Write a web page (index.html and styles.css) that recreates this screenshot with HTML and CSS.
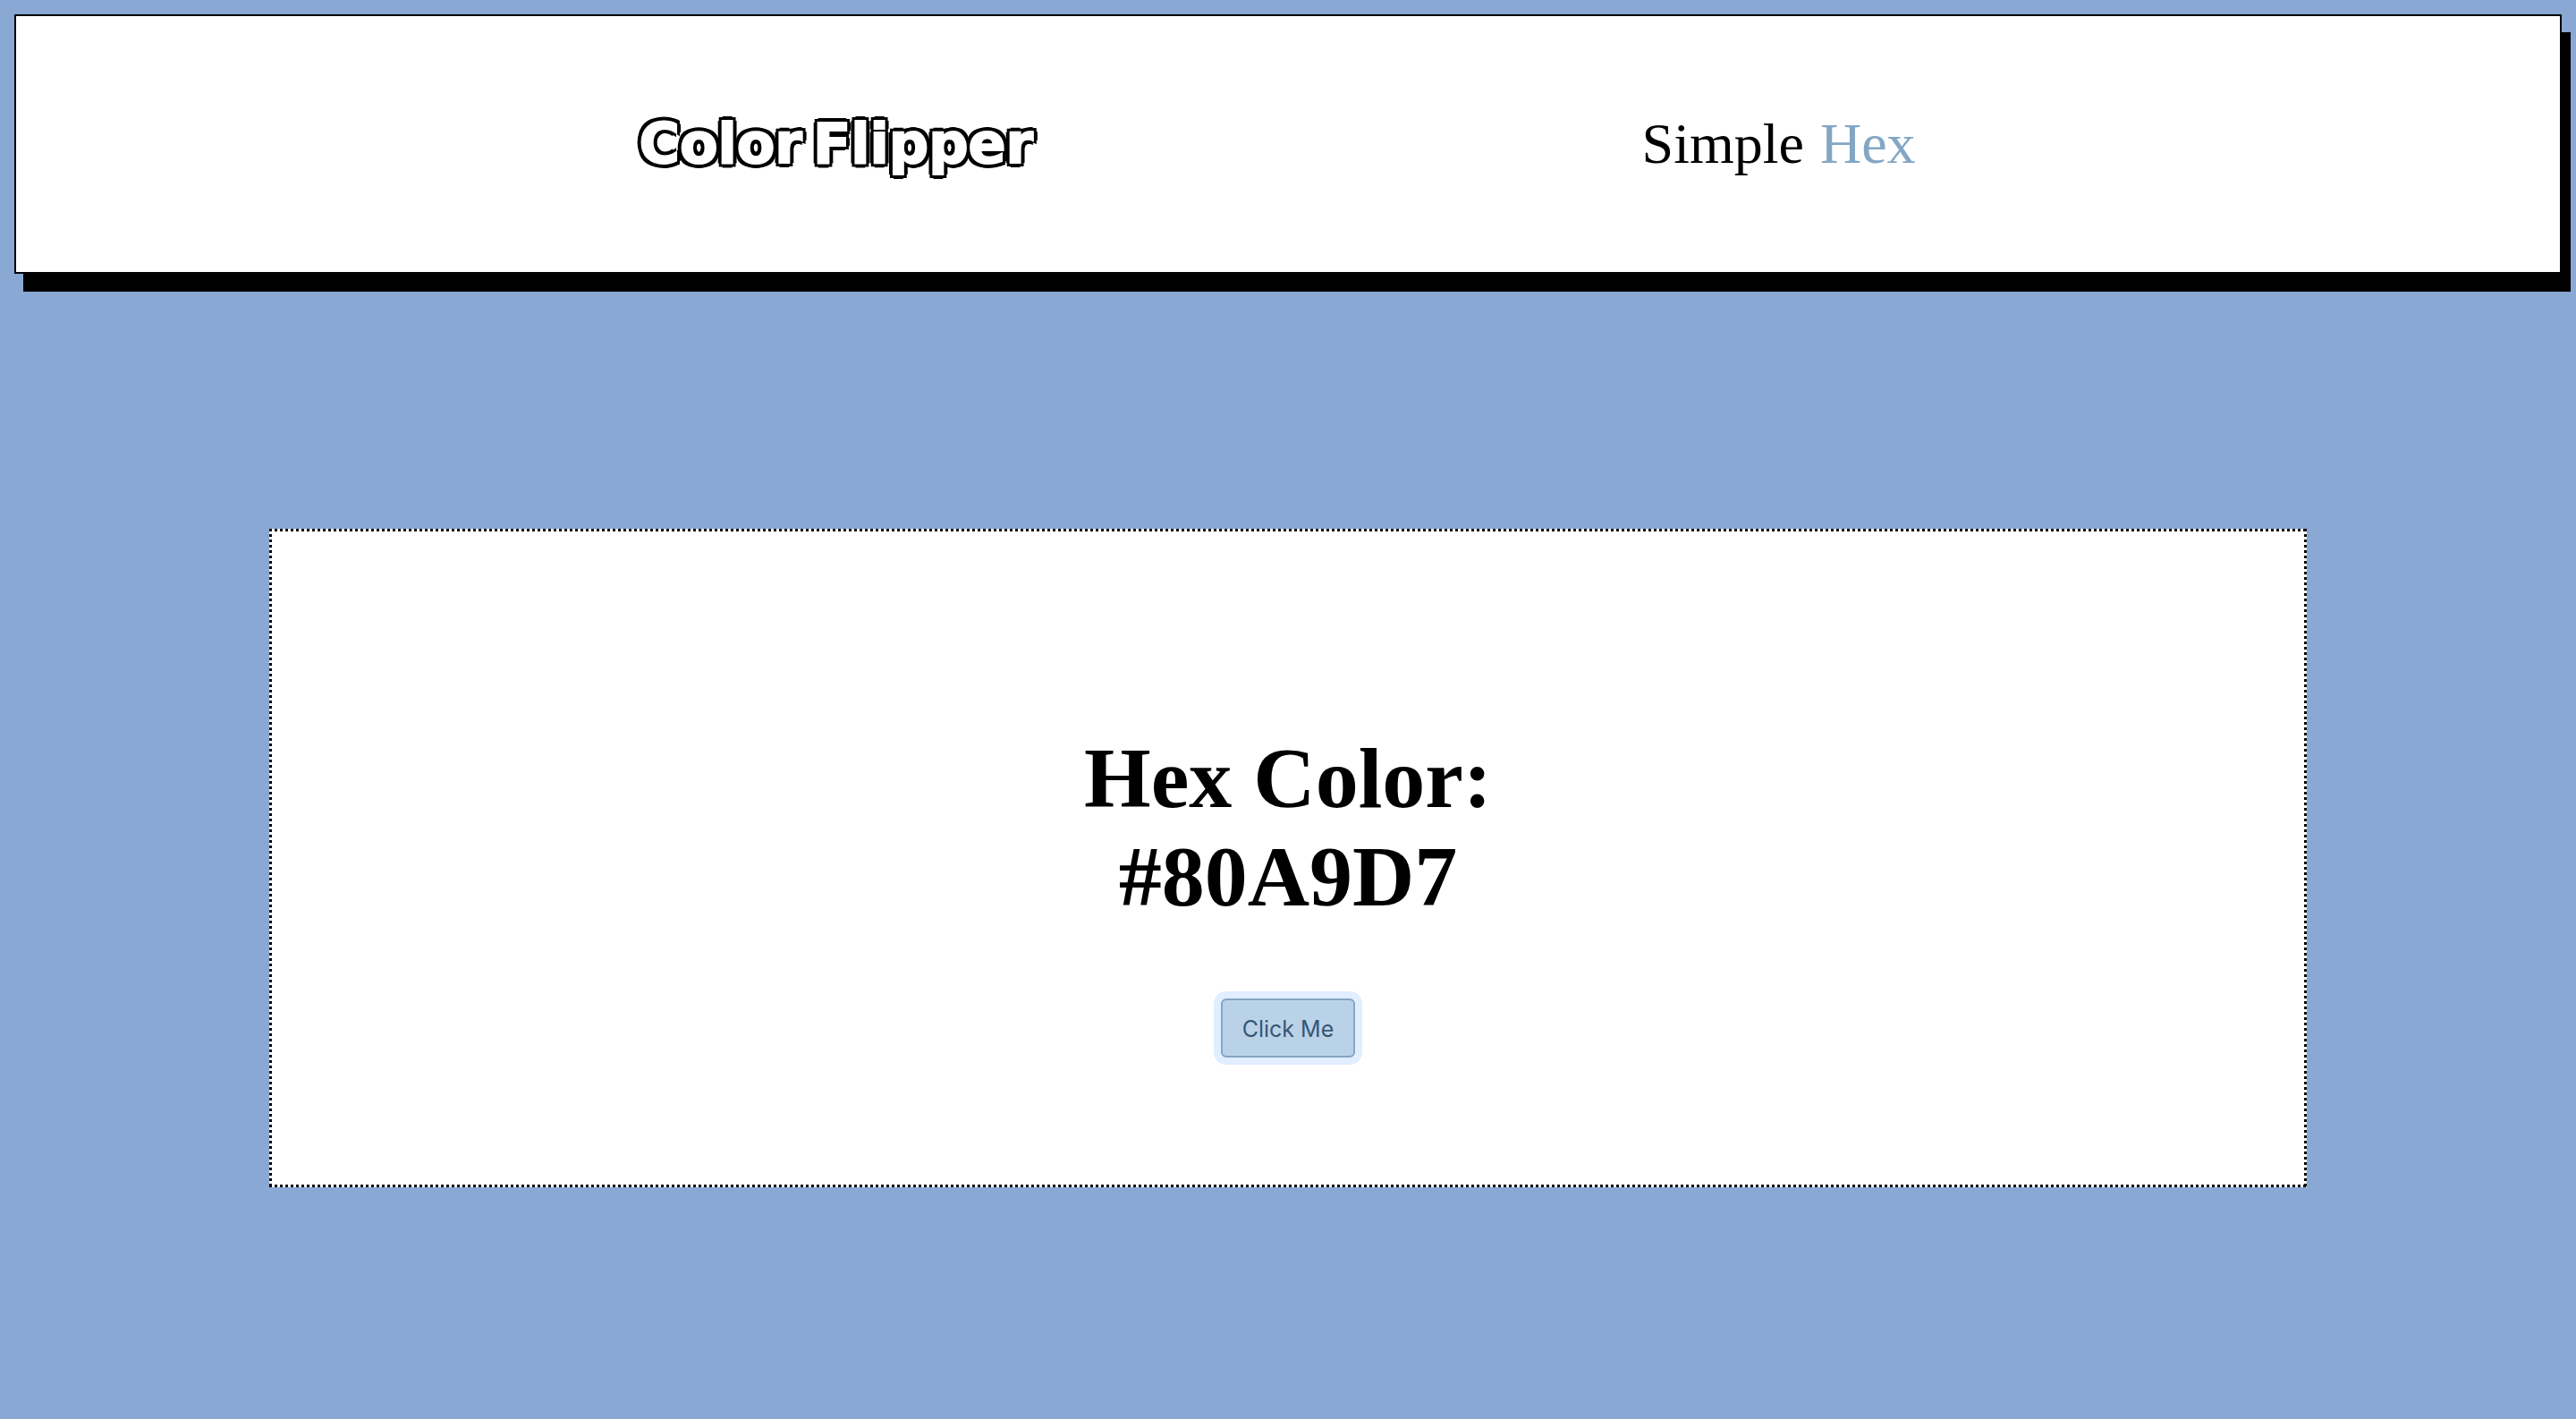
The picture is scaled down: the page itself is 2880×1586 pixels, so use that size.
FILE: index.html
```html
<!DOCTYPE html>
<html lang="en">
<head>
<meta charset="utf-8">
<meta name="viewport" content="width=device-width, initial-scale=1">
<title>Color Flipper</title>
<link rel="stylesheet" href="styles.css">
</head>
<body>
<header class="site-header">
  <div class="logo"><span>Color</span> <span>Flipper</span></div>
  <nav class="site-nav">
    <a class="nav-link" href="#simple">Simple</a>
    <a class="nav-link nav-link-active" href="#hex">Hex</a>
  </nav>
</header>
<main class="content">
  <section class="card">
    <h1 class="title">Hex Color:<br><span class="color-value">#80A9D7</span></h1>
    <button class="flip-button" type="button">Click Me</button>
  </section>
</main>
</body>
</html>
```
FILE: styles.css
```css
* {
  box-sizing: border-box;
}

body {
  display: flex;
  flex-direction: column;
  min-height: 100vh;
  margin: 0;
  padding: 16px 16px 0;
  background: #89a8d3;
  color: #000;
  font-family: "Liberation Serif", "Times New Roman", serif;
}

.site-header {
  display: flex;
  align-items: center;
  justify-content: space-evenly;
  padding: 108px 22px 108px 16px;
  border: 2px solid #000;
  background: #fff;
  box-shadow: 10px 20px #000;
}

.logo {
  display: flex;
  gap: 12px;
  color: #fff;
  font-family: "DejaVu Sans", sans-serif;
  font-size: 62px;
  font-weight: 700;
  line-height: 70px;
  -webkit-text-stroke: 2px #fff;
  text-shadow:
    5px 0 #000, -5px 0 #000, 0 5px #000, 0 -5px #000,
    4px 4px #000, -4px 4px #000, 4px -4px #000, -4px -4px #000;
}

.site-nav {
  display: flex;
  font-size: 64px;
  line-height: 70px;
}

.nav-link {
  margin-right: 18px;
  color: #000;
  text-decoration: none;
}

.nav-link-active {
  color: #83a6c4;
}

.content {
  display: flex;
  flex: 1;
  align-items: center;
  justify-content: center;
  padding-top: 26px;
}

/* Square dots on all four edges */
.card {
  display: flex;
  flex-direction: column;
  align-items: center;
  width: 80%;
  padding: 224px 24px 145px;
  background:
    linear-gradient(90deg, #000 50%, transparent 50%) left top / 6px 3px repeat-x,
    linear-gradient(90deg, #000 50%, transparent 50%) left bottom / 6px 3px repeat-x,
    linear-gradient(#000 50%, transparent 50%) left top / 3px 6px repeat-y,
    linear-gradient(#000 50%, transparent 50%) right top / 3px 6px repeat-y,
    #fff;
}

.title {
  margin: 0 0 81px;
  font-size: 96px;
  line-height: 110px;
  text-align: center;
}

.flip-button {
  padding: 17px 22px 15px;
  border: 2px solid #83a6c4;
  border-radius: 6px;
  background: #bad2e8;
  box-shadow: 0 0 0 8px #e1eeff;
  color: #375674;
  font-family: Inter, sans-serif;
  font-size: 25px;
  line-height: 30px;
}
```
